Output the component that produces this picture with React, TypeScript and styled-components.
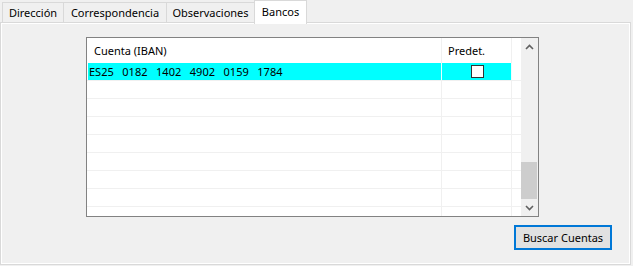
import React from 'react';
import styled, { createGlobalStyle } from 'styled-components';

const GlobalStyle = createGlobalStyle`
    html, body {
        margin: 0;
        padding: 0;
        background: #f0f0f0;
    }
`;

const StyledWindow = styled.div`
    width: 633px;
    height: 266px;
    background: #f0f0f0;
    font-family: "Noto Sans", "Segoe UI", sans-serif;
    font-size: 11px;
    color: #000;
    overflow: hidden;
`;

const StyledTabStrip = styled.div`
    display: flex;
    align-items: flex-end;
    height: 22px;
    padding-left: 2px;
`;

const StyledTab = styled.div<{ $width: number; $active?: boolean }>`
    box-sizing: border-box;
    width: ${p => p.$width}px;
    height: ${p => (p.$active ? 24 : 20)}px;
    margin-right: -1px;
    margin-bottom: ${p => (p.$active ? -2 : 0)}px;
    padding-bottom: ${p => (p.$active ? 3 : 0)}px;
    border: 1px solid #d9d9d9;
    border-bottom: none;
    background: ${p => (p.$active ? '#ffffff' : '#f0f0f0')};
    display: flex;
    align-items: center;
    justify-content: center;
    position: relative;
    z-index: ${p => (p.$active ? 1 : 0)};
    white-space: nowrap;
`;

const StyledPanel = styled.div`
    box-sizing: border-box;
    width: 631px;
    height: 243px;
    border: 1px solid #d9d9d9;
`;

const StyledPanelInner = styled.div`
    box-sizing: border-box;
    height: 100%;
    border: 1px solid #ffffff;
    padding: 13px 17px 0 84px;
    display: flex;
    flex-direction: column;
`;

const StyledGrid = styled.div`
    box-sizing: border-box;
    width: 453px;
    height: 180px;
    border: 1px solid #828282;
    background: #fff;
    display: flex;
`;

const StyledGridBody = styled.div`
    flex: 1;
    display: flex;
    flex-direction: column;
    overflow: hidden;
`;

const StyledHeader = styled.div`
    display: flex;
    height: 25px;
    padding-left: 1px;
    flex-shrink: 0;
`;

const StyledHeaderCell = styled.div<{ $width: number }>`
    box-sizing: border-box;
    width: ${p => p.$width}px;
    border-right: 1px solid #f0f0f0;
    padding: 0 0 1px 6px;
    display: flex;
    align-items: center;
`;

const StyledRow = styled.div`
    box-sizing: border-box;
    display: flex;
    height: 18px;
    padding-left: 1px;
    border-bottom: 1px solid #f0f0f0;
    flex-shrink: 0;
`;

const StyledCell = styled.div<{ $width: number; $selected?: boolean; $center?: boolean }>`
    box-sizing: border-box;
    width: ${p => p.$width}px;
    border-right: 1px solid ${p => (p.$selected ? '#e8ffff' : '#f0f0f0')};
    background: ${p => (p.$selected ? '#00ffff' : 'transparent')};
    padding-left: 1px;
    display: flex;
    align-items: center;
    justify-content: ${p => (p.$center ? 'center' : 'flex-start')};
    white-space: pre;
`;

const StyledCheckbox = styled.div`
    box-sizing: border-box;
    width: 13px;
    height: 13px;
    border: 1px solid #333333;
    background: #fff;
`;

const StyledScrollbar = styled.div`
    width: 17px;
    background: #f0f0f0;
    display: flex;
    flex-direction: column;
`;

const StyledArrow = styled.div`
    height: 17px;
    display: flex;
    align-items: center;
    justify-content: center;
    flex-shrink: 0;
`;

const StyledTrack = styled.div`
    flex: 1;
    display: flex;
    flex-direction: column;
    justify-content: flex-end;
`;

const StyledThumb = styled.div`
    height: 37px;
    margin: 0 1px 0 0;
    background: #cdcdcd;
`;

const StyledButtonRow = styled.div`
    display: flex;
    justify-content: flex-end;
    margin-top: 8px;
`;

const StyledButton = styled.button`
    box-sizing: border-box;
    width: 98px;
    height: 25px;
    border: 2px solid #0078d7;
    background: #e1e1e1;
    font-family: inherit;
    font-size: 11px;
    color: #000;
    padding: 0 0 1px 0;
    outline: none;
`;

const Chevron = ({ down }: { down?: boolean }) => (
    <svg width="9" height="6" viewBox="0 0 9 6">
        <path
            d={down ? 'M1 1 L4.5 4.5 L8 1' : 'M1 5 L4.5 1.5 L8 5'}
            fill="none"
            stroke="#606060"
            strokeWidth="1.6"
        />
    </svg>
);

const tabs = [
    { label: 'Dirección', width: 62 },
    { label: 'Correspondencia', width: 104 },
    { label: 'Observaciones', width: 89 },
    { label: 'Bancos', width: 53, active: true },
];

const cuentas = ['ES25   0182   1402   4902   0159   1784'];
const ROWS = 9;

const App = () => {
    return (
        <StyledWindow>
            <GlobalStyle />
            <StyledTabStrip>
                {tabs.map(t => (
                    <StyledTab key={t.label} $width={t.width} $active={t.active}>{t.label}</StyledTab>
                ))}
            </StyledTabStrip>
            <StyledPanel>
                <StyledPanelInner>
                    <StyledGrid>
                        <StyledGridBody>
                            <StyledHeader>
                                <StyledHeaderCell $width={354}>Cuenta (IBAN)</StyledHeaderCell>
                                <StyledHeaderCell $width={70}>Predet.</StyledHeaderCell>
                            </StyledHeader>
                            {Array.from({ length: ROWS }).map((_, i) => {
                                const cuenta = cuentas[i];
                                const selected = i === 0;
                                return (
                                    <StyledRow key={i}>
                                        <StyledCell $width={354} $selected={selected}>{cuenta || ''}</StyledCell>
                                        <StyledCell $width={70} $selected={selected} $center>
                                            {cuenta ? <StyledCheckbox /> : null}
                                        </StyledCell>
                                    </StyledRow>
                                );
                            })}
                        </StyledGridBody>
                        <StyledScrollbar>
                            <StyledArrow><Chevron /></StyledArrow>
                            <StyledTrack>
                                <StyledThumb />
                            </StyledTrack>
                            <StyledArrow><Chevron down /></StyledArrow>
                        </StyledScrollbar>
                    </StyledGrid>
                    <StyledButtonRow>
                        <StyledButton>Buscar Cuentas</StyledButton>
                    </StyledButtonRow>
                </StyledPanelInner>
            </StyledPanel>
        </StyledWindow>
    );
};

export default App;
